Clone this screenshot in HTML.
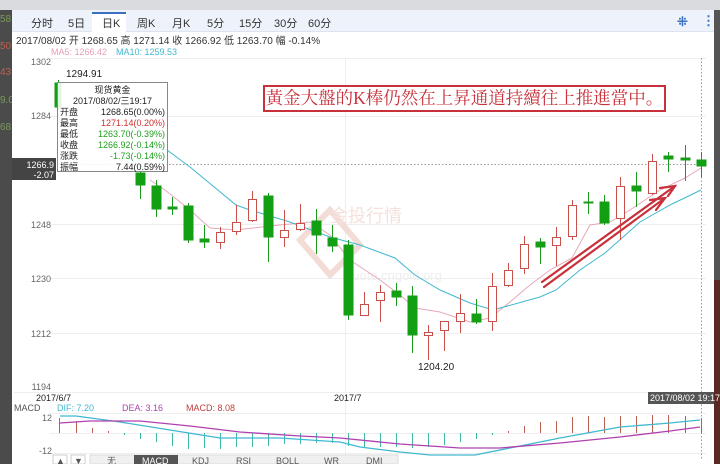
<!DOCTYPE html>
<html><head><meta charset="utf-8"><style>
*{margin:0;padding:0;box-sizing:border-box}
body{width:720px;height:464px;overflow:hidden;background:#fff;font-family:"Liberation Sans","Noto Sans CJK SC",sans-serif;position:relative}
.a{position:absolute;white-space:nowrap}
</style></head><body>
<div class="a" style="left:0;top:0;width:720px;height:10px;background:#d9dbde;font-size:9px;color:#777;line-height:8px;overflow:hidden">&nbsp;</div>
<div class="a" style="left:0;top:10px;width:12px;height:454px;background:#4b4b4b"></div>
<div class="a" style="left:0;top:14px;font-size:10px;color:#7a9a5a">58</div>
<div class="a" style="left:0;top:41px;font-size:10px;color:#c06050">50</div>
<div class="a" style="left:0;top:67px;font-size:10px;color:#c06050">43</div>
<div class="a" style="left:0;top:95px;font-size:10px;color:#7a9a5a">9.0</div>
<div class="a" style="left:0;top:122px;font-size:10px;color:#7a9a5a">68</div>
<div class="a" style="left:714px;top:10px;width:6px;height:270px;background:#555"></div>
<div class="a" style="left:714px;top:280px;width:6px;height:184px;background:#5a2a22"></div>
<div class="a" style="left:12px;top:10px;width:702px;height:454px;background:#fff"></div>
<div class="a" style="left:12px;top:10px;width:702px;height:22px;background:#eef3fb;border-bottom:1px solid #dde4ee"></div>
<div class="a" style="left:92px;top:12px;width:34px;height:21px;background:#fff;border-top:2px solid #3a6fc0"></div>
<div class="a" style="top:15px;left:31px;font-size:11px;color:#333">分时</div>
<div class="a" style="top:15px;left:68px;font-size:11px;color:#333">5日</div>
<div class="a" style="top:15px;left:102px;font-size:11px;color:#333">日K</div>
<div class="a" style="top:15px;left:137px;font-size:11px;color:#333">周K</div>
<div class="a" style="top:15px;left:172px;font-size:11px;color:#333">月K</div>
<div class="a" style="top:15px;left:207px;font-size:11px;color:#333">5分</div>
<div class="a" style="top:15px;left:239px;font-size:11px;color:#333">15分</div>
<div class="a" style="top:15px;left:274px;font-size:11px;color:#333">30分</div>
<div class="a" style="top:15px;left:308px;font-size:11px;color:#333">60分</div>
<div class="a" style="top:14px;left:677px;font-size:13px;color:#3a6fc0;font-weight:bold">⁜</div>
<div class="a" style="top:13px;left:702px;font-size:13px;color:#3a6fc0;font-weight:bold">⋮</div>
<div class="a" style="top:36px;left:16px;font-size:10px;line-height:12px;color:#333">2017/08/02 开 1268.65 高 1271.14 收 1266.92 低 1263.70 幅 -0.14%</div>
<div class="a" style="top:47px;left:51px;font-size:9px;line-height:11px;color:#e8a0b8">MA5: 1266.42</div>
<div class="a" style="top:47px;left:116px;font-size:9px;line-height:11px;color:#40b8d0">MA10: 1259.53</div>
<svg class="a" style="left:0;top:0" width="720" height="464" font-family="Liberation Sans,sans-serif">
<g stroke="#eee" stroke-width="1">
<line x1="50" y1="58.5" x2="706" y2="58.5"/><line x1="50" y1="116.5" x2="706" y2="116.5"/><line x1="50" y1="224.5" x2="706" y2="224.5"/><line x1="50" y1="278.5" x2="706" y2="278.5"/><line x1="50" y1="333.5" x2="706" y2="333.5"/><line x1="14" y1="392.5" x2="706" y2="392.5"/><line x1="345.5" y1="58" x2="345.5" y2="460"/><line x1="50" y1="413.5" x2="706" y2="413.5"/><line x1="50" y1="433.5" x2="706" y2="433.5"/><line x1="50" y1="453.5" x2="706" y2="453.5"/>
</g>
<line x1="50" y1="164.5" x2="706" y2="164.5" stroke="#999" stroke-dasharray="1.5,2"/>
<line x1="701.5" y1="58" x2="701.5" y2="460" stroke="#999" stroke-dasharray="1.5,2"/>
<g font-size="9" fill="#666" text-anchor="end"><text x="51" y="65">1302</text><text x="51" y="119">1284</text><text x="51" y="228">1248</text><text x="51" y="282">1230</text><text x="51" y="337">1212</text><text x="51" y="390">1194</text><text x="52" y="421">12</text><text x="52" y="454">-12</text></g>
<path d="M300 240 L330 210 L360 245 L330 275Z" fill="none" stroke="#f3dcd6" stroke-width="6"/>
<text x="330" y="222" font-size="18" fill="#f5e0db" font-family="Noto Sans CJK SC">金投行情</text>
<text x="345" y="280" font-size="13" fill="#eee">quote.cngold.org</text>
<polyline fill="none" stroke="#e8a8b8" stroke-width="1" points="150,180 165,190 190,210 210,228 236,230 270,226 310,222 330,235 350,260 380,280 400,295 415,308 440,312 470,322 490,318 510,302 530,285 550,270 572,258 590,225 610,222 630,210 660,190 685,178 701,168"/>
<polyline fill="none" stroke="#40b8d0" stroke-width="1" points="150,147 167,150 190,167 236,205 250,210 290,222 330,237 360,245 395,258 415,275 440,290 470,303 493,310 540,297 556,290 580,270 605,253 640,222 670,205 701,190"/>
<g stroke="#1a9a1a" fill="#11a011">
<line x1="140.5" y1="165" x2="140.5" y2="199"/><rect x="136" y="173" width="9" height="12"/>
<line x1="156.5" y1="180" x2="156.5" y2="217"/><rect x="152" y="186" width="9" height="23"/>
<line x1="172.5" y1="197" x2="172.5" y2="215"/><rect x="168" y="207" width="9" height="2"/>
<line x1="188.5" y1="203" x2="188.5" y2="243"/><rect x="184" y="206" width="9" height="34"/>
<line x1="204.5" y1="225" x2="204.5" y2="248"/><rect x="200" y="239" width="9" height="3"/>
<line x1="268.5" y1="193" x2="268.5" y2="262"/><rect x="264" y="196" width="9" height="41"/>
<line x1="316.5" y1="209" x2="316.5" y2="254"/><rect x="312" y="221" width="9" height="14"/>
<line x1="332.5" y1="225" x2="332.5" y2="252"/><rect x="328" y="238" width="9" height="8"/>
<line x1="348.5" y1="240" x2="348.5" y2="320"/><rect x="344" y="245" width="9" height="70"/>
<line x1="396.5" y1="283" x2="396.5" y2="306"/><rect x="392" y="291" width="9" height="6"/>
<line x1="412.5" y1="286" x2="412.5" y2="353"/><rect x="408" y="296" width="9" height="39"/>
<line x1="476.5" y1="299" x2="476.5" y2="324"/><rect x="472" y="314" width="9" height="8"/>
<line x1="540.5" y1="238" x2="540.5" y2="264"/><rect x="536" y="242" width="9" height="5"/>
<line x1="588.5" y1="192" x2="588.5" y2="214"/><rect x="584" y="202" width="9" height="1"/>
<line x1="604.5" y1="195" x2="604.5" y2="225"/><rect x="600" y="202" width="9" height="21"/>
<line x1="636.5" y1="172" x2="636.5" y2="207"/><rect x="632" y="186" width="9" height="5"/>
<line x1="668.5" y1="152" x2="668.5" y2="172"/><rect x="664" y="156" width="9" height="3"/>
<line x1="685.5" y1="145" x2="685.5" y2="181"/><rect x="681" y="158" width="9" height="2"/>
<line x1="701.5" y1="152" x2="701.5" y2="177"/><rect x="697" y="160" width="9" height="6"/>
<line x1="58.5" y1="80" x2="58.5" y2="110"/><rect x="55" y="83" width="6" height="24"/>
</g>
<g stroke="#c8504a" fill="#fff">
<line x1="220.5" y1="227" x2="220.5" y2="249"/><rect x="216.5" y="232.5" width="8" height="10"/>
<line x1="236.5" y1="205" x2="236.5" y2="235"/><rect x="232.5" y="222.5" width="8" height="9"/>
<line x1="252.5" y1="191" x2="252.5" y2="222"/><rect x="248.5" y="199.5" width="8" height="21"/>
<line x1="284.5" y1="210" x2="284.5" y2="247"/><rect x="280.5" y="230.5" width="8" height="7"/>
<line x1="300.5" y1="204" x2="300.5" y2="231"/><rect x="296.5" y="223.5" width="8" height="6"/>
<line x1="364.5" y1="292" x2="364.5" y2="316"/><rect x="360.5" y="304.5" width="8" height="11"/>
<line x1="380.5" y1="285" x2="380.5" y2="322"/><rect x="376.5" y="292.5" width="8" height="8"/>
<line x1="428.5" y1="325" x2="428.5" y2="360"/><rect x="424.5" y="332.5" width="8" height="3"/>
<line x1="444.5" y1="321" x2="444.5" y2="351"/><rect x="440.5" y="321.5" width="8" height="9"/>
<line x1="460.5" y1="294" x2="460.5" y2="333"/><rect x="456.5" y="313.5" width="8" height="8"/>
<line x1="492.5" y1="273" x2="492.5" y2="331"/><rect x="488.5" y="286.5" width="8" height="35"/>
<line x1="508.5" y1="263" x2="508.5" y2="287"/><rect x="504.5" y="270.5" width="8" height="15"/>
<line x1="524.5" y1="236" x2="524.5" y2="274"/><rect x="520.5" y="244.5" width="8" height="24"/>
<line x1="556.5" y1="227" x2="556.5" y2="266"/><rect x="552.5" y="237.5" width="8" height="8"/>
<line x1="572.5" y1="200" x2="572.5" y2="240"/><rect x="568.5" y="205.5" width="8" height="31"/>
<line x1="620.5" y1="177" x2="620.5" y2="240"/><rect x="616.5" y="186.5" width="8" height="32"/>
<line x1="652.5" y1="154" x2="652.5" y2="195"/><rect x="648.5" y="161.5" width="8" height="32"/>
</g>
<g stroke="#c8303a" stroke-width="2.2" fill="none" stroke-linecap="round">
<line x1="542" y1="282" x2="675" y2="186"/><polyline points="660,188 675,186 668,196"/>
<line x1="544" y1="287" x2="665" y2="198"/><polyline points="650,200 665,198 656,210"/>
</g>
<text x="66" y="77" font-size="10" fill="#222">1294.91</text>
<text x="418" y="370" font-size="10" fill="#222">1204.20</text>
<rect x="12" y="158" width="44" height="22" fill="#444"/>
<text x="54" y="168" font-size="9" fill="#fff" text-anchor="end">1266.9</text>
<text x="54" y="178" font-size="9" fill="#fff" text-anchor="end">-2.07</text>
<text x="36" y="401" font-size="9" fill="#222">2017/6/7</text>
<text x="334" y="401" font-size="9" fill="#222">2017/7</text>
<rect x="648" y="392" width="66" height="12" fill="#555"/>
<text x="650" y="401" font-size="9" fill="#fff">2017/08/02 19:17</text>
<text x="14" y="411" font-size="9" fill="#555">MACD</text>
<text x="57" y="411" font-size="9" fill="#40b8d0">DIF: 7.20</text>
<text x="122" y="411" font-size="9" fill="#b040b0">DEA: 3.16</text>
<text x="186" y="411" font-size="9" fill="#c04040">MACD: 8.08</text>
<g stroke="#b86050"><line x1="59.5" y1="418" x2="59.5" y2="433"/><line x1="76.5" y1="421" x2="76.5" y2="433"/><line x1="92.5" y1="428" x2="92.5" y2="433"/><line x1="108.5" y1="431" x2="108.5" y2="433"/>
<line x1="508.5" y1="431" x2="508.5" y2="433"/><line x1="524.5" y1="426" x2="524.5" y2="433"/><line x1="540.5" y1="422" x2="540.5" y2="433"/><line x1="556.5" y1="421" x2="556.5" y2="433"/><line x1="572.5" y1="417" x2="572.5" y2="433"/><line x1="588.5" y1="416" x2="588.5" y2="433"/><line x1="604.5" y1="417" x2="604.5" y2="433"/><line x1="620.5" y1="416" x2="620.5" y2="433"/><line x1="636.5" y1="416" x2="636.5" y2="433"/><line x1="652.5" y1="415" x2="652.5" y2="433"/><line x1="668.5" y1="415" x2="668.5" y2="433"/><line x1="685.5" y1="416" x2="685.5" y2="433"/><line x1="701.5" y1="418" x2="701.5" y2="433"/></g>
<g stroke="#40b8a8"><line x1="124.5" y1="433" x2="124.5" y2="435"/><line x1="140.5" y1="433" x2="140.5" y2="439"/><line x1="156.5" y1="433" x2="156.5" y2="442"/><line x1="172.5" y1="433" x2="172.5" y2="446"/><line x1="188.5" y1="433" x2="188.5" y2="449"/><line x1="204.5" y1="433" x2="204.5" y2="448"/><line x1="220.5" y1="433" x2="220.5" y2="449"/><line x1="236.5" y1="433" x2="236.5" y2="447"/><line x1="252.5" y1="433" x2="252.5" y2="447"/><line x1="268.5" y1="433" x2="268.5" y2="446"/><line x1="284.5" y1="433" x2="284.5" y2="444"/><line x1="300.5" y1="433" x2="300.5" y2="444"/><line x1="316.5" y1="433" x2="316.5" y2="443"/><line x1="332.5" y1="433" x2="332.5" y2="443"/><line x1="348.5" y1="433" x2="348.5" y2="446"/><line x1="364.5" y1="433" x2="364.5" y2="447"/><line x1="380.5" y1="433" x2="380.5" y2="447"/><line x1="396.5" y1="433" x2="396.5" y2="447"/><line x1="412.5" y1="433" x2="412.5" y2="448"/><line x1="428.5" y1="433" x2="428.5" y2="447"/><line x1="444.5" y1="433" x2="444.5" y2="445"/><line x1="460.5" y1="433" x2="460.5" y2="442"/><line x1="476.5" y1="433" x2="476.5" y2="439"/><line x1="492.5" y1="433" x2="492.5" y2="435"/></g>
<polyline fill="none" stroke="#40b8d0" stroke-width="1.3" points="60,416 76,416 120,422 170,430 220,438 280,438 340,442 360,447 400,452 430,455 475,455 510,448 560,438 620,427 670,423 700,420"/>
<polyline fill="none" stroke="#b040b0" stroke-width="1.3" points="60,423 90,421 140,421 190,426 240,432 300,436 340,438 400,444 460,448 500,448 560,443 620,437 670,431 700,427"/>
<g font-size="9" fill="#555"><rect x="53" y="455" width="14" height="9" fill="#fff" stroke="#ccc"/><text x="56" y="464">▲</text><rect x="71" y="455" width="14" height="9" fill="#fff" stroke="#ccc"/><text x="74" y="464">▼</text>
<rect x="90" y="455" width="308" height="9" fill="#f0f0f0" stroke="#ddd"/><rect x="134" y="455" width="44" height="9" fill="#555"/>
<text x="107" y="464">无</text><text x="142" y="464" fill="#fff">MACD</text><text x="192" y="464">KDJ</text><text x="236" y="464">RSI</text><text x="276" y="464">BOLL</text><text x="324" y="464">WR</text><text x="366" y="464">DMI</text></g>
</svg>
<div class="a" style="left:57px;top:82px;width:111px;height:90px;background:rgba(255,255,255,0.88);border:1px solid #888;font-size:9px;color:#222;line-height:11px">
<div style="text-align:center;margin-top:2px">现货黄金</div>
<div style="text-align:center">2017/08/02/三19:17</div>
<div style="display:flex;justify-content:space-between;padding:0 2px"><span>开盘</span><span>1268.65(0.00%)</span></div>
<div style="display:flex;justify-content:space-between;padding:0 2px"><span>最高</span><span style="color:#d03030">1271.14(0.20%)</span></div>
<div style="display:flex;justify-content:space-between;padding:0 2px"><span>最低</span><span style="color:#20a020">1263.70(-0.39%)</span></div>
<div style="display:flex;justify-content:space-between;padding:0 2px"><span>收盘</span><span style="color:#20a020">1266.92(-0.14%)</span></div>
<div style="display:flex;justify-content:space-between;padding:0 2px"><span>涨跌</span><span style="color:#20a020">-1.73(-0.14%)</span></div>
<div style="display:flex;justify-content:space-between;padding:0 2px"><span>振幅</span><span>7.44(0.59%)</span></div>
</div>
<div class="a" style="left:263px;top:85px;width:403px;height:27px;background:#fff;border:2px solid #c8303a;color:#c8303a;font-family:'Liberation Serif','Noto Serif CJK SC',serif;font-size:17.5px;line-height:23px;text-align:center">黃金大盤的K棒仍然在上昇通道持續往上推進當中。</div>
</body></html>
